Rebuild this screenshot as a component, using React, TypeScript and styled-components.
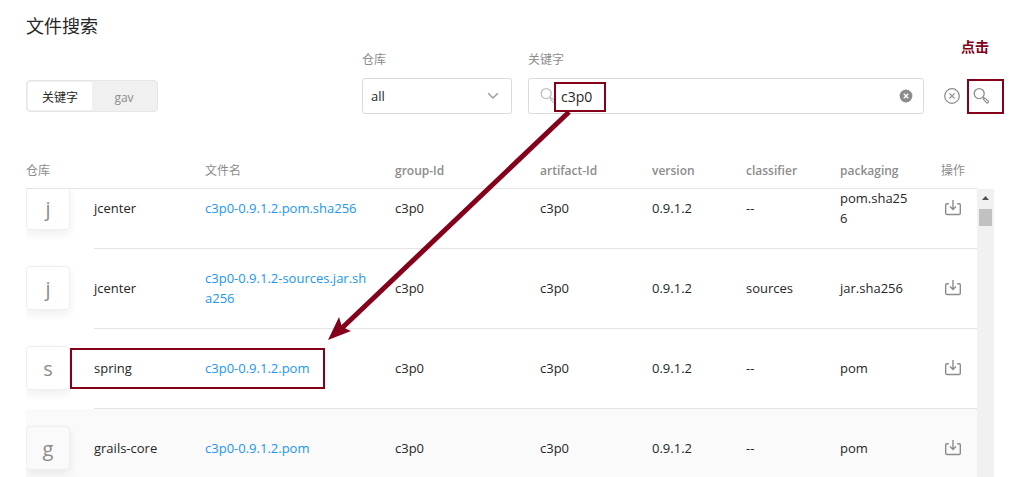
import React, { useLayoutEffect, useRef, useState } from 'react';
import styled, { createGlobalStyle } from 'styled-components';

const GlobalStyle = createGlobalStyle`
  *, *::before, *::after { box-sizing: border-box; }
  body {
    margin: 0;
    background: #fff;
    color: #262626;
    font: 13px/20px "Open Sans", "Noto Sans CJK SC", sans-serif;
  }
  button, input, select { font-family: inherit; color: inherit; }
`;

const Page = styled.main`
  position: relative;
  display: flex;
  flex-direction: column;
  height: 100vh;
  padding: 14px 37px 0 26px;
  overflow: hidden;
`;

const Title = styled.h1`
  margin: 0;
  font-size: 18px;
  line-height: 24px;
  font-weight: 400;
`;

const SearchBar = styled.form`
  display: grid;
  grid-template-columns: 320px 150px minmax(0, 1fr) auto;
  column-gap: 16px;
  align-items: end;
  margin: 12px 0 36px;
`;

const Segmented = styled.div`
  display: flex;
  justify-self: start;
  width: 132px;
  height: 32px;
  margin-bottom: 2px;
  border: 1px solid #e6e6e6;
  border-radius: 4px;
  background: #f0f0f0;
  padding: 1px;
`;

const Segment = styled.button<{ $active: boolean }>`
  flex: 1;
  border: 0;
  padding: 4px 0 0;
  border-radius: 3px;
  font-size: 12px;
  line-height: 20px;
  cursor: pointer;
  background: ${(p) => (p.$active ? '#fff' : 'transparent')};
  color: ${(p) => (p.$active ? '#262626' : '#8c8c8c')};
`;

const Field = styled.div`
  display: flex;
  flex-direction: column;
  gap: 8px;
`;

const Label = styled.label`
  font-size: 12px;
  line-height: 20px;
  color: #8c8c8c;
`;

const Control = styled.div`
  display: flex;
  align-items: center;
  position: relative;
  height: 36px;
  border: 1px solid #d9d9d9;
  border-radius: 3px;
  background: #fff;
`;

const Select = styled.select`
  appearance: none;
  width: 100%;
  height: 100%;
  border: 0;
  outline: 0;
  padding: 0 32px 0 8px;
  background: transparent;
  font-size: 13px;
`;

const Chevron = styled.svg`
  position: absolute;
  right: 12px;
  pointer-events: none;
`;

const KeywordControl = styled(Control)`
  padding: 0 10px;
  gap: 4px;
`;

const Input = styled.input`
  flex: 1;
  min-width: 0;
  height: 100%;
  border: 0;
  outline: 0;
  padding: 0;
  background: transparent;
  font-size: 14px;
`;

const InputIcon = styled.span`
  display: flex;
  color: #bfbfbf;
`;

const IconButton = styled.button`
  display: flex;
  padding: 0;
  border: 0;
  background: none;
  color: #8c8c8c;
  cursor: pointer;
`;

const Actions = styled.div`
  display: flex;
  align-items: center;
  gap: 12px;
  height: 36px;
  padding: 0 4px;
`;

const Results = styled.div`
  display: flex;
  flex: 1;
  min-height: 0;
`;

const Scroller = styled.div`
  flex: 1;
  min-width: 0;
  overflow: hidden;
`;

const Table = styled.table`
  width: 100%;
  table-layout: fixed;
  border-collapse: separate;
  border-spacing: 0;
`;

const HeadCell = styled.th`
  position: sticky;
  top: 0;
  z-index: 1;
  height: 39px;
  padding: 4px 0 0;
  border-bottom: 1px solid #e4e4e4;
  background: #fff;
  color: #8c8c8c;
  font-size: 12px;
  font-weight: 600;
  text-align: left;
  white-space: nowrap;

  &:lang(zh) { font-weight: 400; }
`;

const Row = styled.tr<{ $hover?: boolean }>`
  background: ${(p) => (p.$hover ? '#fafafa' : 'transparent')};
`;

const Cell = styled.td`
  height: 80px;
  padding: 0 24px 2px 0;
  border-bottom: 1px solid #e4e4e4;
  vertical-align: middle;
  word-break: break-all;
`;

const AvatarCell = styled(Cell)`
  padding: 0 0 2px;
  border-bottom: 0;
`;

const NameCell = styled(Cell)`
  padding-right: 0;
`;

const PackagingCell = styled(Cell)`
  padding-right: 30px;
`;

const ActionCell = styled(Cell)`
  padding: 0 0 2px 3px;
`;

const Avatar = styled.div`
  display: flex;
  align-items: center;
  justify-content: center;
  width: 44px;
  height: 44px;
  padding-top: 2px;
  border: 1px solid #eee;
  border-radius: 4px;
  box-shadow: 0 4px 10px rgba(0, 0, 0, 0.07);
  color: #8c8c8c;
  font-size: 20px;
`;

const FileLink = styled.a`
  color: #2196f3;
  text-decoration: none;
`;

const ScrollTrack = styled.div`
  display: flex;
  flex-direction: column;
  align-items: center;
  width: 17px;
  margin-top: 39px;
  background: #f1f1f1;
`;

const ScrollThumb = styled.div`
  width: 13px;
  height: 17px;
  margin-top: 3px;
  background: #c1c1c1;
`;

const Annotations = styled.svg`
  position: absolute;
  top: 0;
  left: 0;
  pointer-events: none;
  z-index: 2;
`;

const ClickNote = styled.strong`
  position: absolute;
  top: 37px;
  right: 42px;
  color: #85001b;
  font-size: 14px;
  font-weight: 700;
`;

const SearchIcon = () => (
  <svg width="18" height="18" viewBox="0 0 18 18" fill="none" stroke="currentColor">
    <circle cx="7.2" cy="6.6" r="5" strokeWidth="1.3" />
    <path d="M10.7 10.2l1.2 1.1M12.7 10.9l3.6 3.2a.9.9 0 0 1 .1 1.2l-.5.5a.9.9 0 0 1-1.2 0l-3.3-3.5z" strokeWidth="1.2" strokeLinejoin="round" />
  </svg>
);

const CircleXIcon = () => (
  <svg width="16" height="16" viewBox="0 0 16 16" fill="none" stroke="currentColor">
    <circle cx="8" cy="8" r="7.3" strokeWidth="1.2" />
    <path d="M5.4 5.4l5.2 5.2M10.6 5.4l-5.2 5.2" strokeWidth="1.2" />
  </svg>
);

const ClearIcon = () => (
  <svg width="14" height="14" viewBox="0 0 14 14">
    <circle cx="7" cy="7" r="6.4" fill="#8c8c8c" />
    <path d="M4.8 4.8l4.4 4.4M9.2 4.8l-4.4 4.4" stroke="#fff" strokeWidth="1.4" />
  </svg>
);

const DownloadIcon = () => (
  <svg width="18" height="18" viewBox="0 0 18 18" fill="none" stroke="currentColor" strokeWidth="1.4">
    <path d="M4.8 4.7H2.8Q1.7 4.7 1.7 5.8v8.5q0 1.2 1.2 1.2h12.2q1.2 0 1.2-1.2V5.8q0-1.1-1.1-1.1H13.2" />
    <path d="M9 1v9.4M6 7.4l3 3 3-3" />
  </svg>
);

interface FileRow {
  repo: string;
  file: string;
  classifier: string;
  packaging: string;
}

const files: FileRow[] = [
  { repo: 'jcenter', file: 'c3p0-0.9.1.2.pom.sha256', classifier: '--', packaging: 'pom.sha256' },
  { repo: 'jcenter', file: 'c3p0-0.9.1.2-sources.jar.sha256', classifier: 'sources', packaging: 'jar.sha256' },
  { repo: 'spring', file: 'c3p0-0.9.1.2.pom', classifier: '--', packaging: 'pom' },
  { repo: 'grails-core', file: 'c3p0-0.9.1.2.pom', classifier: '--', packaging: 'pom' },
];

const columnWidths = [68, 111, undefined, 145, 112, 94, 94, 101, 36];

export default function App() {
  const [mode, setMode] = useState('keyword');
  const [keyword, setKeyword] = useState('c3p0');
  const scroller = useRef<HTMLDivElement>(null);

  useLayoutEffect(() => {
    if (scroller.current) scroller.current.scrollTop = 20;
  }, []);

  return (
    <>
      <GlobalStyle />
      <Page lang="en">
        <Title>文件搜索</Title>
        <SearchBar onSubmit={(e) => e.preventDefault()}>
          <Segmented>
            <Segment type="button" $active={mode === 'keyword'} onClick={() => setMode('keyword')}>关键字</Segment>
            <Segment type="button" $active={mode === 'gav'} onClick={() => setMode('gav')}>gav</Segment>
          </Segmented>
          <Field>
            <Label htmlFor="repo">仓库</Label>
            <Control>
              <Select id="repo" defaultValue="all">
                <option value="all">all</option>
              </Select>
              <Chevron width="12" height="8" viewBox="0 0 12 8" fill="none" stroke="#999" strokeWidth="1.4">
                <path d="M1.2 1.2L6 6l4.8-4.8" />
              </Chevron>
            </Control>
          </Field>
          <Field>
            <Label htmlFor="keyword">关键字</Label>
            <KeywordControl>
              <InputIcon><SearchIcon /></InputIcon>
              <Input id="keyword" value={keyword} onChange={(e) => setKeyword(e.target.value)} />
              <IconButton type="button" aria-label="清空" onClick={() => setKeyword('')}><ClearIcon /></IconButton>
            </KeywordControl>
          </Field>
          <Actions>
            <IconButton type="reset" aria-label="重置"><CircleXIcon /></IconButton>
            <IconButton type="submit" aria-label="搜索"><SearchIcon /></IconButton>
          </Actions>
        </SearchBar>

        <Results>
          <Scroller ref={scroller}>
            <Table>
              <colgroup>
                {columnWidths.map((width, i) => <col key={i} width={width} />)}
              </colgroup>
              <thead>
                <tr>
                  <HeadCell colSpan={2} lang="zh">仓库</HeadCell>
                  <HeadCell lang="zh">文件名</HeadCell>
                  <HeadCell>group-Id</HeadCell>
                  <HeadCell>artifact-Id</HeadCell>
                  <HeadCell>version</HeadCell>
                  <HeadCell>classifier</HeadCell>
                  <HeadCell>packaging</HeadCell>
                  <HeadCell lang="zh">操作</HeadCell>
                </tr>
              </thead>
              <tbody>
                {files.map((f) => (
                  <Row key={f.repo + f.file} $hover={f.repo === 'grails-core'}>
                    <AvatarCell><Avatar>{f.repo[0]}</Avatar></AvatarCell>
                    <NameCell>{f.repo}</NameCell>
                    <Cell><FileLink href="#">{f.file}</FileLink></Cell>
                    <Cell>c3p0</Cell>
                    <Cell>c3p0</Cell>
                    <Cell>0.9.1.2</Cell>
                    <Cell>{f.classifier}</Cell>
                    <PackagingCell>{f.packaging}</PackagingCell>
                    <ActionCell>
                      <IconButton type="button" aria-label="下载"><DownloadIcon /></IconButton>
                    </ActionCell>
                  </Row>
                ))}
              </tbody>
            </Table>
          </Scroller>
          <ScrollTrack>
            <svg width="17" height="17" viewBox="0 0 17 17"><path d="M5 11l3.5-4 3.5 4z" fill="#505050" /></svg>
            <ScrollThumb />
          </ScrollTrack>
        </Results>

        <Annotations width="1031" height="477" viewBox="0 0 1031 477" fill="none" stroke="#85001b" strokeWidth="2">
          <rect x="555" y="83" width="50" height="28" />
          <rect x="968" y="80" width="35" height="33" />
          <rect x="71" y="349" width="253" height="39" />
          <path d="M569 112L342 328" strokeWidth="5" />
          <path d="M328 340l11-23 3 10 9 4z" fill="#85001b" stroke="none" />
        </Annotations>
        <ClickNote lang="zh">点击</ClickNote>
      </Page>
    </>
  );
}
